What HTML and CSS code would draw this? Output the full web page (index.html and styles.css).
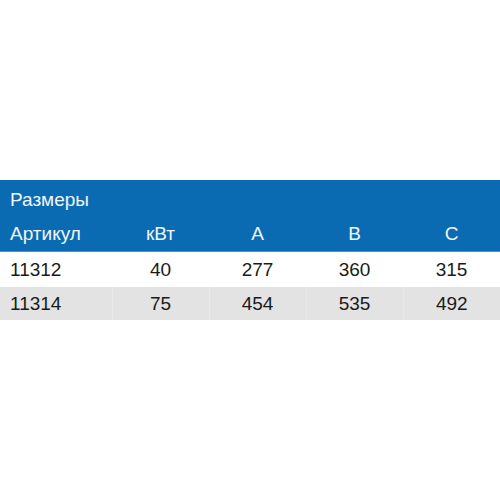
FILE: index.html
```html
<!DOCTYPE html>
<html lang="ru">
<head>
<meta charset="utf-8">
<link rel="stylesheet" href="styles.css">
</head>
<body>
<div class="page">
  <table class="sizes">
    <colgroup>
      <col class="c-first"><col class="c"><col class="c"><col class="c"><col class="c">
    </colgroup>
    <thead>
      <tr class="title"><th colspan="5">Размеры</th></tr>
      <tr class="heads"><th class="left">Артикул</th><th>кВт</th><th>A</th><th>B</th><th>C</th></tr>
    </thead>
    <tbody>
      <tr><td class="left">11312</td><td>40</td><td>277</td><td>360</td><td>315</td></tr>
      <tr class="alt"><td class="left">11314</td><td>75</td><td>454</td><td>535</td><td>492</td></tr>
    </tbody>
  </table>
</div>
</body>
</html>
```
FILE: styles.css
```css
html, body {
  margin: 0;
  padding: 0;
  background: #ffffff;
}
.page {
  padding-top: 180px;
  font-family: "Liberation Sans", Arial, sans-serif;
}
.sizes {
  width: 500px;
  border-collapse: collapse;
  table-layout: fixed;
  font-size: 19px;
}
.c-first { width: 112px; }
.c { width: 97px; }
.sizes th, .sizes td {
  height: 35px;
  padding: 0;
  text-align: center;
  font-weight: normal;
  vertical-align: middle;
}
.sizes thead th {
  background: #0a6bb3;
  color: #f2f6fb;
}
.sizes .title th {
  text-align: left;
  padding-left: 10px;
  padding-top: 2px;
}
.sizes .heads th {
  height: 34px;
  border-bottom: 1px solid #4a93cc;
}
.sizes .left {
  text-align: left;
  padding-left: 10px;
}
.sizes td {
  color: #1a1a1a;
}
.sizes tr.alt td {
  background: #e3e3e3;
  border-left: 1px solid #e9e9e9;
  height: 33px;
}
.sizes tr.alt td:first-child {
  border-left: none;
}
```
